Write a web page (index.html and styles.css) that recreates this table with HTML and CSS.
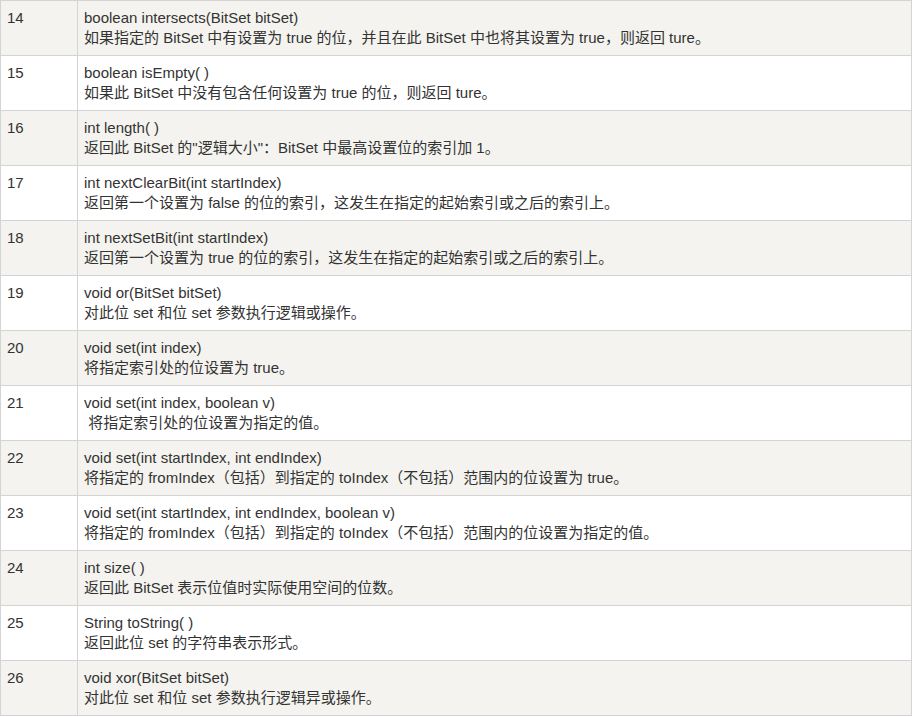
FILE: index.html
```html
<!DOCTYPE html>
<html lang="zh-CN">
<head>
<meta charset="utf-8">
<title>BitSet</title>
<link rel="stylesheet" href="styles.css">
</head>
<body>
<table class="ref">
<colgroup><col class="c-num"><col class="c-desc"></colgroup>
<tbody>
<tr><td>14</td><td>boolean intersects(BitSet bitSet)<br>如果指定的 BitSet 中有设置为 true 的位，并且在此 BitSet 中也将其设置为 true，则返回 ture。</td></tr>
<tr><td>15</td><td>boolean isEmpty( )<br>如果此 BitSet 中没有包含任何设置为 true 的位，则返回 ture。</td></tr>
<tr><td>16</td><td>int length( )<br>返回此 BitSet 的"逻辑大小"：BitSet 中最高设置位的索引加 1。</td></tr>
<tr><td>17</td><td>int nextClearBit(int startIndex)<br>返回第一个设置为 false 的位的索引，这发生在指定的起始索引或之后的索引上。</td></tr>
<tr><td>18</td><td>int nextSetBit(int startIndex)<br>返回第一个设置为 true 的位的索引，这发生在指定的起始索引或之后的索引上。</td></tr>
<tr><td>19</td><td>void or(BitSet bitSet)<br>对此位 set 和位 set 参数执行逻辑或操作。</td></tr>
<tr><td>20</td><td>void set(int index)<br>将指定索引处的位设置为 true。</td></tr>
<tr><td>21</td><td>void set(int index, boolean v)<br>&nbsp;将指定索引处的位设置为指定的值。</td></tr>
<tr><td>22</td><td>void set(int startIndex, int endIndex)<br>将指定的 fromIndex（包括）到指定的 toIndex（不包括）范围内的位设置为 true。</td></tr>
<tr><td>23</td><td>void set(int startIndex, int endIndex, boolean v)<br>将指定的 fromIndex（包括）到指定的 toIndex（不包括）范围内的位设置为指定的值。</td></tr>
<tr><td>24</td><td>int size( )<br>返回此 BitSet 表示位值时实际使用空间的位数。</td></tr>
<tr><td>25</td><td>String toString( )<br>返回此位 set 的字符串表示形式。</td></tr>
<tr><td>26</td><td>void xor(BitSet bitSet)<br>对此位 set 和位 set 参数执行逻辑异或操作。</td></tr>
</tbody>
</table>
</body>
</html>
```

FILE: styles.css
```css
html, body {
  margin: 0;
  padding: 0;
  background: #ffffff;
}
.ref {
  border-collapse: collapse;
  table-layout: fixed;
  width: 912px;
  font-family: "Liberation Sans", "Noto Sans CJK SC", sans-serif;
  font-size: 15px;
  line-height: 20px;
  color: #333333;
}
.c-num { width: 77px; }
.ref td {
  border: 1px solid #d4d4d4;
  padding: 7px 6px;
  vertical-align: top;
  height: 40px;
  white-space: nowrap;
}
.ref tr:nth-child(odd) td {
  background: #f4f3ef;
}
```
